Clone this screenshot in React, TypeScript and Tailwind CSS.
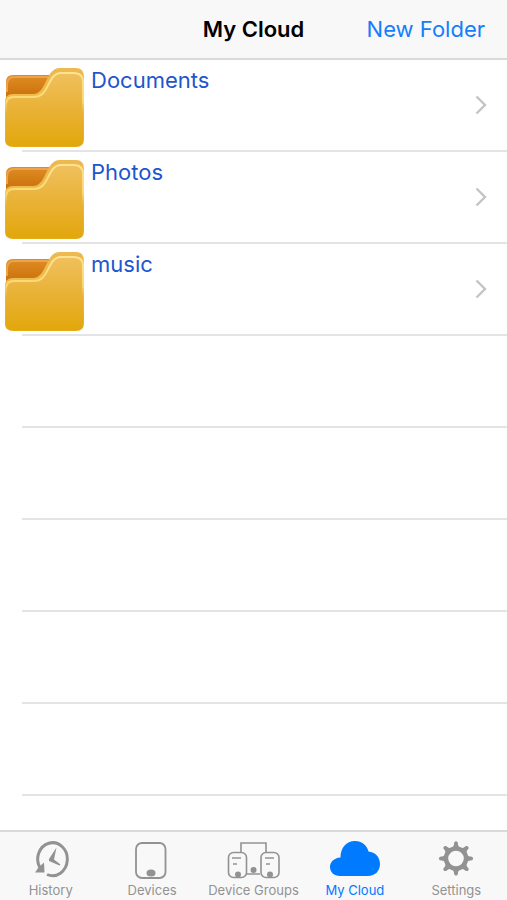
import type { ReactNode } from "react";

const folders = ["Documents", "Photos", "music"];
const emptyRows = [0, 1, 2, 3, 4];

function FolderIcon() {
  return (
    <svg viewBox="0 0 80 80" className="h-20 w-20 shrink-0" aria-hidden="true">
      <defs>
        <linearGradient id="back" x1="0" y1="0" x2="0" y2="1">
          <stop offset="0" stopColor="#e08c22" />
          <stop offset="0.6" stopColor="#cc7410" />
          <stop offset="1" stopColor="#cc7410" />
        </linearGradient>
        <linearGradient id="front" x1="0" y1="0" x2="0" y2="1">
          <stop offset="0" stopColor="#efc05e" />
          <stop offset="0.5" stopColor="#e9b236" />
          <stop offset="1" stopColor="#e2a70c" />
        </linearGradient>
        <linearGradient id="edge" x1="0" y1="0" x2="0" y2="1">
          <stop offset="0" stopColor="#edb950" />
          <stop offset="0.4" stopColor="#efbb48" />
          <stop offset="1" stopColor="#e5ab18" />
        </linearGradient>
        <linearGradient id="shine" x1="0" y1="0" x2="0" y2="1">
          <stop offset="0" stopColor="#ffe391" />
          <stop offset="0.4" stopColor="#fbd672" />
          <stop offset="0.6" stopColor="#e9b236" stopOpacity="0" />
        </linearGradient>
      </defs>
      <path d="M1 40V14Q1 7 8 7H52V40Z" fill="url(#back)" />
      <path d="M2 24V17Q2 9 9 9H43" fill="none" stroke="#eda34c" strokeWidth="2" />
      <path
        d="M0 72V34Q0 26 8 26H28C42 26 40 0 55 0H71Q79 0 79 9V71Q79 79 71 79H8Q0 79 0 72Z"
        fill="url(#edge)"
      />
      <path
        d="M1 71V37Q1 29 9 29H29C45 29 42 5 56 5H69Q78 5 78 14V71Q78 78 71 78H8Q1 78 1 71Z"
        fill="url(#front)"
        stroke="url(#shine)"
        strokeWidth="2"
      />
    </svg>
  );
}

function ChevronIcon() {
  return (
    <svg viewBox="0 0 12 20" className="h-5 w-3 shrink-0" fill="none" stroke="#c4c4c8" strokeWidth="2.4" aria-hidden="true">
      <path d="M1.5 1.5L10 10L1.5 18.5" />
    </svg>
  );
}

function HistoryIcon() {
  return (
    <svg viewBox="0 0 56 40" className="h-10 w-14" fill="none" stroke="currentColor" aria-hidden="true">
      <path d="M17 28A14.800 16.500 0 1 1 24 34.500" strokeWidth="3" />
      <path d="M21 22.500L21.500 32.500H12L15.500 27.500Z" fill="currentColor" stroke="none" />
      <path d="M33.500 7.500L31 19.500L37.500 24.500L36.500 25.500L26 21L26 19Z" fill="currentColor" stroke="none" />
    </svg>
  );
}

function DeviceIcon() {
  return (
    <svg viewBox="0 0 56 40" className="h-10 w-14" fill="none" stroke="currentColor" aria-hidden="true">
      <rect x="12" y="3" width="29.500" height="35" rx="6" strokeWidth="1.8" />
      <ellipse cx="27" cy="33" rx="4.500" ry="3.500" fill="currentColor" stroke="none" />
    </svg>
  );
}

function DeviceGroupsIcon() {
  return (
    <svg viewBox="0 0 56 40" className="h-10 w-14" fill="none" stroke="currentColor" strokeWidth="1.6" aria-hidden="true">
      <path d="M16 13V3H41V13M22 34H35" />
      <rect x="3.500" y="12.500" width="18" height="25" rx="5" />
      <rect x="36" y="12.500" width="18" height="25" rx="5" />
      <path d="M7 18H16M8 24H12M40 18H49M41 24H45" />
      <circle cx="13" cy="34.500" r="3" fill="currentColor" stroke="none" />
      <circle cx="28.500" cy="30" r="3" fill="currentColor" stroke="none" />
      <circle cx="45" cy="34.500" r="3" fill="currentColor" stroke="none" />
    </svg>
  );
}

function CloudIcon() {
  return (
    <svg viewBox="0 0 56 40" className="h-10 w-14" fill="currentColor" aria-hidden="true">
      <path d="M13 36C7 36 3 32 3 27C3 22 7 18 13.500 17.500C13.500 8 19 1 28 1C35 1 40 5.500 41.500 11.500C48 12 53 17 53 24C53 31 48 36 41 36Z" />
    </svg>
  );
}

function SettingsIcon() {
  const teeth = [0, 45, 90, 135, 180, 225, 270, 315];
  return (
    <svg viewBox="0 0 56 40" className="h-10 w-14" fill="none" aria-hidden="true">
      <circle cx="28" cy="18.500" r="10" stroke="currentColor" strokeWidth="4.4" />
      {teeth.map((angle) => (
        <path
          key={angle}
          d="M23 9Q26.200 6.500 26.200 2.500Q28 0.200 29.800 2.500Q29.800 6.500 33 9Z"
          fill="currentColor"
          transform={`rotate(${angle} 28 18.500)`}
        />
      ))}
    </svg>
  );
}

type TabProps = { label: string; active?: boolean; children: ReactNode };

function Tab({ label, active, children }: TabProps) {
  return (
    <a
      href="#"
      aria-current={active ? "page" : undefined}
      className={`flex flex-col items-center pt-2 ${active ? "text-[#007aff]" : "text-[#929292]"}`}
    >
      {children}
      <span className="whitespace-nowrap text-[13px] leading-5">{label}</span>
    </a>
  );
}

export default function App() {
  return (
    <div className="flex min-h-screen flex-col bg-white font-['Inter',sans-serif]">
      <header className="grid h-15 grid-cols-[1fr_auto_1fr] items-center border-b-2 border-[#d9d9db] bg-[#f8f8f8] px-[22px]">
        <h1 className="col-start-2 text-[22px] font-semibold text-black">My Cloud</h1>
        <button type="button" className="justify-self-end whitespace-nowrap text-[22px] text-[#157efb]">
          New Folder
        </button>
      </header>

      <main className="flex-1">
        <ul>
          {folders.map((name) => (
            <li key={name}>
              <a href="#" className="flex h-[90px] pl-[5px]">
                <span className="pt-2">
                  <FolderIcon />
                </span>
                <span className="pl-[6px] pt-1 text-[22px] leading-8 text-[#1f55cc]">{name}</span>
                <span className="ml-auto flex items-center pr-5">
                  <ChevronIcon />
                </span>
              </a>
              <div className="ml-[22px] h-0.5 bg-[#e4e4e6]" />
            </li>
          ))}
        </ul>
        {/* Empty rows keep the list ruled down to the tab bar */}
        {emptyRows.map((row) => (
          <div key={row} className="ml-[22px] h-23 border-b-2 border-[#e4e4e6]" />
        ))}
      </main>

      <nav className="grid grid-cols-5 border-t-2 border-[#d9d9db] bg-[#f8f8f8]">
        <Tab label="History">
          <HistoryIcon />
        </Tab>
        <Tab label="Devices">
          <DeviceIcon />
        </Tab>
        <Tab label="Device Groups">
          <DeviceGroupsIcon />
        </Tab>
        <Tab label="My Cloud" active>
          <CloudIcon />
        </Tab>
        <Tab label="Settings">
          <SettingsIcon />
        </Tab>
      </nav>
    </div>
  );
}
